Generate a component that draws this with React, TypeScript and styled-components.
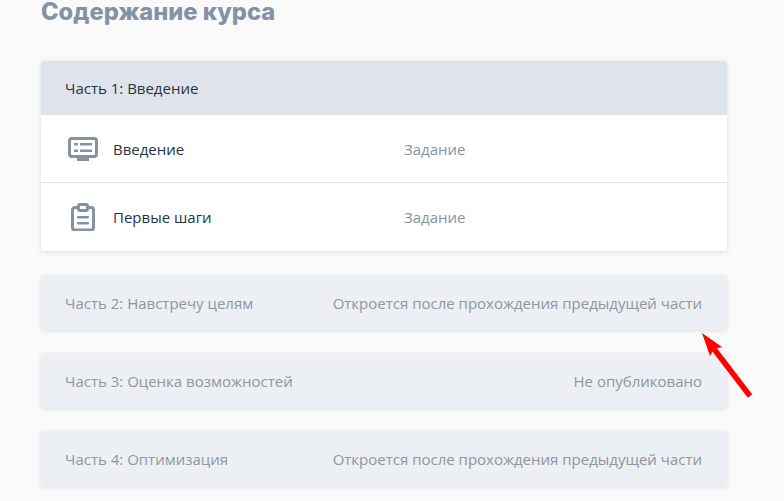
import React from "react";
import styled, { createGlobalStyle } from "styled-components";

const Global = createGlobalStyle`
  html, body { margin: 0; padding: 0; background: #fafafa; }
  body { font-family: "Open Sans", "Noto Sans", sans-serif; overflow: hidden; height: 501px; }
  * { box-sizing: border-box; }
`;

const Page = styled.main`
  position: relative;
  width: 784px;
  height: 501px;
  padding: 0 57px 0 41px;
  overflow: hidden;
`;

const Title = styled.h1`
  margin: 0;
  height: 61px;
  font-family: Inter, sans-serif;
  font-size: 23.7px;
  line-height: 24px;
  font-weight: 800;
  color: #8492a6;
`;

const Sections = styled.div`
  display: flex;
  flex-direction: column;
  gap: 23px;
`;

const Card = styled.section`
  margin-bottom: 1px;
  background: #fff;
  border-radius: 3px;
  box-shadow: 0 1px 5px rgba(60, 72, 88, 0.16);
  overflow: hidden;
`;

const OpenHeader = styled.div`
  height: 54px;
  display: flex;
  align-items: center;
  padding: 0 24px;
  background: #dfe4ec;
  font-size: 15px;
  color: #273444;
`;

const Row = styled.div`
  height: 68px;
  display: grid;
  grid-template-columns: 72px 291px 1fr;
  align-items: center;
  &:not(:last-child) { border-bottom: 1px solid #e0e6ed; }
`;

const IconCell = styled.div`
  display: flex;
  justify-content: center;
  padding-left: 12px;
`;

const LessonName = styled.span`
  font-size: 15px;
  color: #273444;
`;

const LessonType = styled.span`
  font-size: 15px;
  color: #8492a6;
`;

const LockedHeader = styled.div`
  height: 55px;
  display: flex;
  align-items: center;
  justify-content: space-between;
  padding: 0 25px 0 24px;
  background: #eceff4;
  border-radius: 3px;
  box-shadow: 0 1px 4px rgba(60, 72, 88, 0.14);
  font-size: 15px;
  color: #90969f;
`;

const Arrow = styled.svg`
  position: absolute;
  left: 695px;
  top: 325px;
  width: 65px;
  height: 80px;
`;

const ScreenIcon = () => (
  <svg width="30" height="24" viewBox="0 0 30 24" fill="none">
    <rect x="1.500" y="1.500" width="27" height="18" rx="2.500" stroke="#8492a6" strokeWidth="3" />
    <rect x="6" y="6" width="4" height="2.500" fill="#8492a6" />
    <rect x="12" y="6" width="12" height="2.500" fill="#8492a6" />
    <rect x="6" y="12.500" width="4" height="2.500" fill="#8492a6" />
    <rect x="12" y="12.500" width="12" height="2.500" fill="#8492a6" />
    <rect x="9" y="20" width="12" height="4" fill="#8492a6" />
  </svg>
);

const ClipboardIcon = () => (
  <svg width="24" height="28" viewBox="0 0 24 28" fill="none">
    <path d="M7 4.500H4A2.500 2.500 0 0 0 1.500 7v17.500A2.500 2.500 0 0 0 4 27h16a2.500 2.500 0 0 0 2.500-2.500V7A2.500 2.500 0 0 0 20 4.500h-3" stroke="#8492a6" strokeWidth="3" />
    <rect x="7.500" y="1.500" width="9" height="6" rx="1.500" stroke="#8492a6" strokeWidth="3" />
    <rect x="6" y="13" width="12" height="2.500" rx="1" fill="#8492a6" />
    <rect x="6" y="19" width="12" height="2.500" rx="1" fill="#8492a6" />
  </svg>
);

const locked = [
  ["Часть 2: Навстречу целям", "Откроется после прохождения предыдущей части"],
  ["Часть 3: Оценка возможностей", "Не опубликовано"],
  ["Часть 4: Оптимизация", "Откроется после прохождения предыдущей части"],
];

export default function App() {
  return (
    <Page>
      <Global />
      <Title>Содержание курса</Title>
      <Sections>
        <Card>
          <OpenHeader>Часть 1: Введение</OpenHeader>
          <Row>
            <IconCell><ScreenIcon /></IconCell>
            <LessonName>Введение</LessonName>
            <LessonType>Задание</LessonType>
          </Row>
          <Row>
            <IconCell><ClipboardIcon /></IconCell>
            <LessonName>Первые шаги</LessonName>
            <LessonType>Задание</LessonType>
          </Row>
        </Card>
        {locked.map(([name, status]) => (
          <LockedHeader key={name}>
            <span>{name}</span>
            <span>{status}</span>
          </LockedHeader>
        ))}
      </Sections>
      <Arrow viewBox="0 0 65 80">
        <path d="M55 71L19 24" stroke="#f00" strokeWidth="5.500" />
        <path d="M7 8L27 22L19 24L15 31Z" fill="#f00" />
      </Arrow>
    </Page>
  );
}
